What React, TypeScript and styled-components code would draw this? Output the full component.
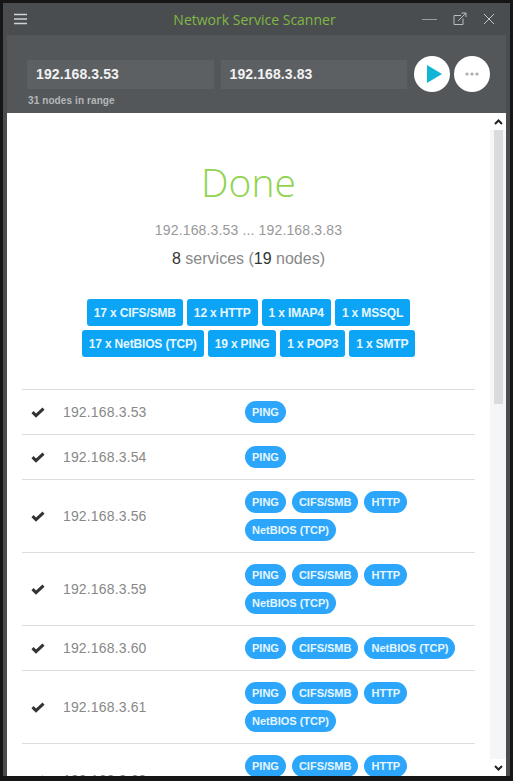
import { FC } from "react";
import styled, { createGlobalStyle } from "styled-components";

const GlobalStyle = createGlobalStyle`
  html, body {
    margin: 0;
    height: 100%;
    overflow: hidden;
    background: #141414;
  }
  * {
    box-sizing: border-box;
  }
`;

const Frame = styled.div`
  width: 513px;
  height: 781px;
  padding: 3px 3px 5px 3px;
  background: #161616;
  font-family: "Liberation Sans", Arial, sans-serif;
`;

const Window = styled.div`
  height: 100%;
  display: flex;
  flex-direction: column;
  padding: 0 4px;
  background: #4a4d4f;
`;

const TitleBar = styled.header`
  flex: none;
  height: 32px;
  margin: 0 -4px;
  padding: 0 15px 0 11px;
  display: grid;
  grid-template-columns: 1fr auto 1fr;
  align-items: center;
`;

const TitleText = styled.div`
  font-family: "Open Sans", sans-serif;
  font-size: 14px;
  color: #80b845;
`;

const MenuIcon = styled.svg`
  display: block;
`;

const WindowButtons = styled.div`
  display: flex;
  align-items: center;
  justify-content: flex-end;
  gap: 16px;
`;

const Toolbar = styled.section`
  flex: none;
  height: 78px;
  padding: 21px 16px 0 20px;
  background: #53575a;
`;

const InputRow = styled.div`
  display: flex;
  align-items: center;
  gap: 7px;
`;

const AddressBox = styled.div`
  flex: 1;
  height: 29px;
  padding-left: 9px;
  display: flex;
  align-items: center;
  background: #5c6063;
  color: #f2f2f2;
  font-size: 14px;
  font-weight: bold;
  letter-spacing: 0.1px;
`;

const RoundButtons = styled.div`
  display: flex;
  gap: 4px;
`;

const RoundButton = styled.div`
  width: 36px;
  height: 36px;
  border-radius: 50%;
  background: #fff;
  display: flex;
  align-items: center;
  justify-content: center;
`;

const RangeNote = styled.div`
  margin-top: 3px;
  padding-left: 1px;
  font-size: 10px;
  font-weight: bold;
  letter-spacing: 0.1px;
  color: #b4b7b9;
`;

const Content = styled.main`
  flex: 1;
  min-height: 0;
  display: flex;
  background: #fff;
`;

const Scroller = styled.div`
  flex: 1;
  min-width: 0;
  overflow: hidden;
  padding: 0 15px;
`;

const Heading = styled.h1`
  margin: 45px 0 0;
  text-align: center;
  font-family: "Open Sans", sans-serif;
  font-weight: 300;
  font-size: 39px;
  line-height: 48px;
  color: #8fd44f;
`;

const RangeLine = styled.div`
  margin-top: 15px;
  text-align: center;
  font-size: 14px;
  line-height: 18px;
  letter-spacing: 0.15px;
  color: #999;
`;

const SummaryLine = styled.div`
  margin-top: 10px;
  text-align: center;
  font-size: 16px;
  line-height: 20px;
  color: #888;
`;

const Dark = styled.span`
  color: #333;
`;

const TagCloud = styled.div`
  margin-top: 30px;
  padding: 0 45px;
  display: flex;
  flex-wrap: wrap;
  justify-content: center;
  gap: 4px;
`;

const CountTag = styled.span`
  height: 27px;
  padding: 0 7px;
  display: flex;
  align-items: center;
  border-radius: 3px;
  background: #0ca5f5;
  color: #e6f6ff;
  font-size: 12px;
  font-weight: bold;
  letter-spacing: -0.15px;
`;

const HostTable = styled.div`
  margin-top: 32px;
  border-top: 1px solid #ddd;
`;

const HostRow = styled.div`
  display: grid;
  grid-template-columns: 41px 182px 1fr;
  align-items: center;
  padding: 11px 0;
  border-bottom: 1px solid #ddd;
`;

const CheckCell = styled.div`
  padding-left: 9px;
  display: flex;
`;

const HostAddress = styled.div`
  font-size: 14px;
  letter-spacing: 0.15px;
  color: #888;
`;

const Pills = styled.div`
  display: flex;
  flex-wrap: wrap;
  gap: 6px;
`;

const Pill = styled.span`
  height: 22px;
  padding: 0 7px;
  display: flex;
  align-items: center;
  border-radius: 11px;
  background: #2ba6fb;
  color: #e6f6ff;
  font-size: 11px;
  font-weight: bold;
`;

const ScrollTrack = styled.div`
  flex: none;
  width: 16px;
  display: flex;
  flex-direction: column;
  align-items: center;
  background: #f5f6f7;
`;

const ScrollArrow = styled.div`
  flex: none;
  width: 100%;
  height: 17px;
  background: #fff;
  display: flex;
  align-items: center;
  justify-content: center;
`;

const ScrollThumb = styled.div`
  flex: none;
  width: 9px;
  height: 274px;
  background: #dadbdc;
`;

const Spacer = styled.div`
  flex: 1;
`;

interface Host {
  address: string;
  services: string[];
}

const counts = [
  "17 x CIFS/SMB",
  "12 x HTTP",
  "1 x IMAP4",
  "1 x MSSQL",
  "17 x NetBIOS (TCP)",
  "19 x PING",
  "1 x POP3",
  "1 x SMTP",
];

const full = ["PING", "CIFS/SMB", "HTTP", "NetBIOS (TCP)"];

const hosts: Host[] = [
  { address: "192.168.3.53", services: ["PING"] },
  { address: "192.168.3.54", services: ["PING"] },
  { address: "192.168.3.56", services: full },
  { address: "192.168.3.59", services: full },
  { address: "192.168.3.60", services: ["PING", "CIFS/SMB", "NetBIOS (TCP)"] },
  { address: "192.168.3.61", services: full },
  { address: "192.168.3.63", services: full },
];

const Chevron: FC<{ up?: boolean }> = ({ up }) => (
  <svg width="9" height="6" viewBox="0 0 9 6">
    <path
      d={up ? "M1 5 L4.5 1.5 L8 5" : "M1 1 L4.5 4.5 L8 1"}
      fill="none"
      stroke="#222"
      strokeWidth="2"
    />
  </svg>
);

const CheckMark: FC = () => (
  <svg width="14" height="11" viewBox="0 0 14 11">
    <path d="M1.5 5.2 L5 8.6 L12.5 1.6" fill="none" stroke="#333" strokeWidth="3" />
  </svg>
);

const App: FC = () => {
  return (
    <Frame>
      <GlobalStyle />
      <Window>
        <TitleBar>
          <MenuIcon width="13" height="12" viewBox="0 0 13 12">
            <path d="M0 1.5H13M0 6H13M0 10.5H13" stroke="#d0d2d3" strokeWidth="1.6" />
          </MenuIcon>
          <TitleText>Network Service Scanner</TitleText>
          <WindowButtons>
            <svg width="15" height="3" viewBox="0 0 15 3">
              <path d="M0 1.5H15" stroke="#9a9d9f" strokeWidth="1" />
            </svg>
            <svg width="14" height="14" viewBox="0 0 14 14">
              <path d="M8 3.5H1V12.5H10V6.5M5 9L13 1M8.5 1H13V5" fill="none" stroke="#b9bbbd" strokeWidth="1" />
            </svg>
            <svg width="12" height="12" viewBox="0 0 12 12">
              <path d="M1 1L11 11M11 1L1 11" stroke="#c2c4c5" strokeWidth="1" />
            </svg>
          </WindowButtons>
        </TitleBar>
        <Toolbar>
          <InputRow>
            <AddressBox>192.168.3.53</AddressBox>
            <AddressBox>192.168.3.83</AddressBox>
            <RoundButtons>
              <RoundButton>
                <svg width="20" height="18" viewBox="0 0 20 18">
                  <path d="M5 0L20 9L5 18Z" fill="#10b5d6" />
                </svg>
              </RoundButton>
              <RoundButton>
                <svg width="14" height="4" viewBox="0 0 14 4">
                  <circle cx="2" cy="2" r="1.6" fill="#a8aaac" />
                  <circle cx="7" cy="2" r="1.6" fill="#a8aaac" />
                  <circle cx="12" cy="2" r="1.6" fill="#a8aaac" />
                </svg>
              </RoundButton>
            </RoundButtons>
          </InputRow>
          <RangeNote>31 nodes in range</RangeNote>
        </Toolbar>
        <Content>
          <Scroller>
            <Heading>Done</Heading>
            <RangeLine>192.168.3.53 ... 192.168.3.83</RangeLine>
            <SummaryLine>
              <Dark>8</Dark> services (<Dark>19</Dark> nodes)
            </SummaryLine>
            <TagCloud>
              {counts.map((c) => (
                <CountTag key={c}>{c}</CountTag>
              ))}
            </TagCloud>
            <HostTable>
              {hosts.map((h) => (
                <HostRow key={h.address}>
                  <CheckCell>
                    <CheckMark />
                  </CheckCell>
                  <HostAddress>{h.address}</HostAddress>
                  <Pills>
                    {h.services.map((s) => (
                      <Pill key={s}>{s}</Pill>
                    ))}
                  </Pills>
                </HostRow>
              ))}
            </HostTable>
          </Scroller>
          <ScrollTrack>
            <ScrollArrow>
              <Chevron up />
            </ScrollArrow>
            <ScrollThumb />
            <Spacer />
            <ScrollArrow>
              <Chevron />
            </ScrollArrow>
          </ScrollTrack>
        </Content>
      </Window>
    </Frame>
  );
};

export default App;
